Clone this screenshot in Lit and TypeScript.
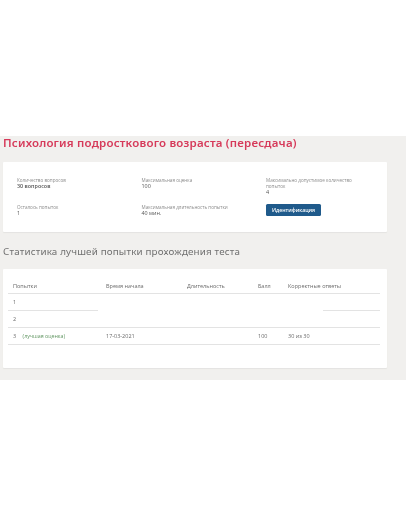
import { LitElement, html, css } from "lit";
import { customElement } from "lit/decorators.js";

@customElement("app-root")
export class AppRoot extends LitElement {
  static styles = css`
    :host { display: block; width: 406px; height: 516px; background: #fff; font-family: "Open Sans", "Noto Sans", sans-serif; color: #444; overflow: hidden; }
    .page { margin-top: 136px; height: 244px; background: #f1f0ee; padding: 0 19px 0 3px; box-sizing: border-box; filter: blur(0.5px); }
    h1 { margin: 0; font-family: "Noto Sans", sans-serif; font-weight: 600; font-size: 11.5px; letter-spacing: 0.2px; line-height: 13px; color: #d63a5a; white-space: nowrap; }
    h2 { margin: 13px 0 0; font-family: "Noto Sans", sans-serif; font-weight: 400; font-size: 9.8px; letter-spacing: 0.17px; line-height: 14px; color: #707070; white-space: nowrap; }
    .card { background: #fff; box-shadow: 0 1px 1px #e4e3e1; border-radius: 1px; }
    .info { margin-top: 13px; height: 70px; box-sizing: border-box; padding: 15px 14px 0; display: grid; grid-template-columns: 124.5px 124.5px 100px; grid-template-rows: 27px 20px; }
    .item { font-size: 4.6px; line-height: 6px; color: #8c8c8c; }
    .item b { display: block; font-size: 5.4px; line-height: 6px; font-weight: 400; color: #555; }
    .item b.bold { font-weight: 600; }
    .btn { width: 55px; height: 12px; background: #1f5a8b; color: #fff; border-radius: 1.5px; font-size: 5.2px; font-weight: 600; display: flex; align-items: center; justify-content: center; }
    .stats { margin-top: 10px; height: 99px; box-sizing: border-box; padding: 7px 7px 0 5px; font-size: 5.5px; color: #6a6a6a; }
    .row { display: grid; grid-template-columns: 93px 81px 71px 30px 1fr; height: 17px; align-items: center; padding-left: 5px; border-bottom: 0.7px solid #e3e3e3; box-sizing: border-box; }
    .row.head { height: 17.5px; padding-top: 3px; }
    .row.split { border-bottom: 0; position: relative; }
    .seg { position: absolute; bottom: 0; height: 0.7px; background: #e3e3e3; }
    .seg.a { left: 0; width: 90px; }
    .seg.b { right: 0; width: 57px; }
    .good { color: #5f9560; margin-left: 5px; font-size: 5.3px; }
  `;

  render() {
    return html`
      <div class="page">
        <h1>Психология подросткового возраста (пересдача)</h1>
        <section class="card info">
          <div class="item">Количество вопросов<b class="bold">30 вопросов</b></div>
          <div class="item">Максимальная оценка<b>100</b></div>
          <div class="item">Максимально допустимое количество попыток<b>4</b></div>
          <div class="item">Осталось попыток<b>1</b></div>
          <div class="item">Максимальная длительность попытки<b>40 мин.</b></div>
          <div class="btn">Идентификация</div>
        </section>
        <h2>Статистика лучшей попытки прохождения теста</h2>
        <section class="card stats">
          <div class="row head"><span>Попытки</span><span>Время начала</span><span>Длительность</span><span>Балл</span><span>Корректные ответы</span></div>
          <div class="row split"><span>1</span><i class="seg a"></i><i class="seg b"></i></div>
          <div class="row"><span>2</span></div>
          <div class="row"><span>3 <span class="good">(лучшая оценка)</span></span><span>17-03-2021</span><span></span><span>100</span><span>30 из 30</span></div>
        </section>
      </div>
    `;
  }
}
